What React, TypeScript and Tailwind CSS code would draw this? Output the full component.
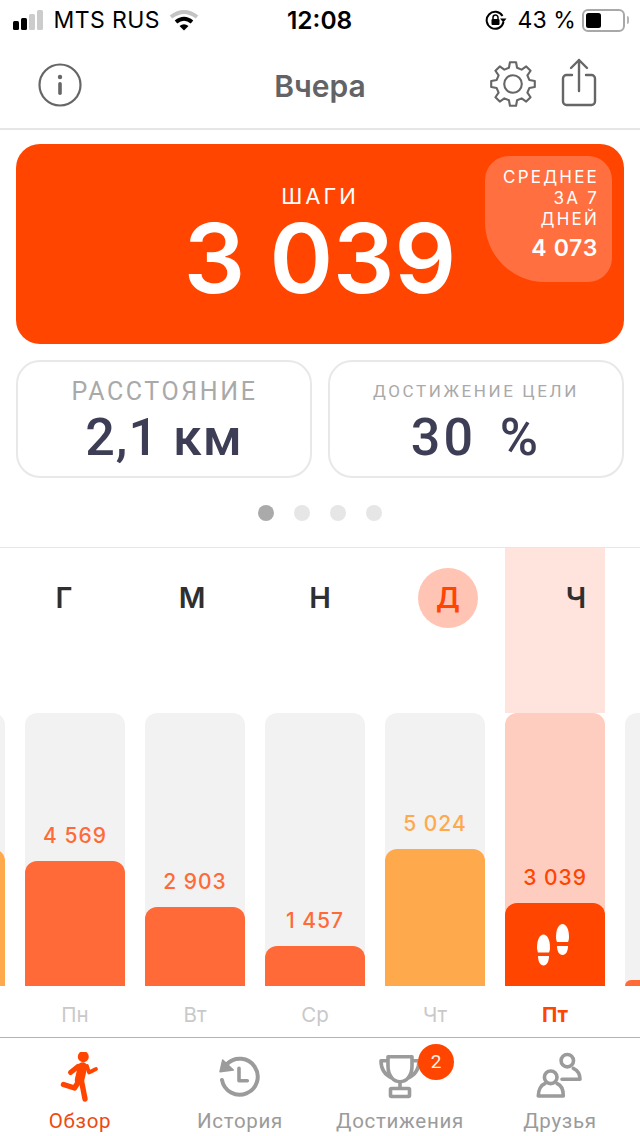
import React from "react";

const inter = "font-['Inter','Liberation_Sans',sans-serif]";

function gearPath() {
  const pts: string[] = [];
  for (let i = 0; i < 8; i++) {
    const a = (i * 45 - 90) * (Math.PI / 180);
    const offs: [number, number][] = [
      [-14, 16.8],
      [-8, 22],
      [8, 22],
      [14, 16.8],
    ];
    for (const [d, r] of offs) {
      const t = a + (d * Math.PI) / 180;
      pts.push(`${(24 + r * Math.cos(t)).toFixed(2)} ${(24 + r * Math.sin(t)).toFixed(2)}`);
    }
  }
  return "M" + pts.join("L") + "Z";
}

function StatusBar() {
  return (
    <div className={`h-[44px] shrink-0 flex items-center relative text-black pb-[4px] ${inter}`}>
      <div className="flex items-center pl-[13px]">
        <div className="flex items-end gap-[2.500px] h-[20px]">
          <span className="w-[5.500px] h-[9px] rounded-[1.500px] bg-black" />
          <span className="w-[5.500px] h-[12px] rounded-[1.500px] bg-black" />
          <span className="w-[5.500px] h-[16px] rounded-[1.500px] bg-[#cccccc]" />
          <span className="w-[5.500px] h-[20px] rounded-[1.500px] bg-[#cccccc]" />
        </div>
        <span className="ml-[11px] text-[23px] leading-none font-normal tracking-[0.4px]">MTS RUS</span>
        <svg className="ml-[9px]" width="30" height="22" viewBox="0 0 30 22" fill="none">
          <path d="M2 8Q15 -2 28 8" stroke="#c4c4c4" strokeWidth="4" />
          <path d="M7 13Q15 6.500 23 13" stroke="#000" strokeWidth="4" />
          <path d="M10.500 17Q15 13.500 19.500 17L15 21.500Z" fill="#000" />
        </svg>
      </div>
      <span className="absolute left-[287px] top-[7px] text-[24.500px] leading-[26px] font-semibold">12:08</span>
      <div className="ml-auto flex items-center pr-[11px]">
        <svg width="22" height="20" viewBox="0 0 22 20" fill="none">
          <path d="M17.500 6A8.500 8.500 0 1 0 18.500 12" stroke="#000" strokeWidth="2" />
          <path d="M15 8.500h6.500l-3.200 4z" fill="#000" />
          <rect x="6.500" y="9" width="8" height="6" rx="1" fill="#000" />
          <path d="M8 9V7.500a2.500 2.500 0 0 1 5 0V9" stroke="#000" strokeWidth="1.500" />
        </svg>
        <span className="ml-[10px] text-[23px] leading-none tracking-[0.1px]">43 %</span>
        <div className="ml-[6px] flex items-center">
          <div className="w-[43px] h-[23px] rounded-[6px] border-2 border-[#a8a8a8] p-[2px] flex">
            <div className="w-[15px] rounded-[2.500px] bg-black" />
          </div>
          <div className="ml-[2px] w-[2px] h-[8px] rounded-r-full bg-[#b5b5b5]" />
        </div>
      </div>
    </div>
  );
}

function Header() {
  return (
    <div className="h-[86px] shrink-0 border-b-2 border-[#e6e6e6] flex items-center relative">
      <svg className="absolute left-[37px] top-[18px]" width="46" height="46" viewBox="0 0 46 46" fill="none">
        <circle cx="23" cy="23" r="20.500" stroke="#666" strokeWidth="2.200" />
        <circle cx="23" cy="15" r="2.200" fill="#666" />
        <rect x="21.200" y="20" width="3.600" height="13" rx="1.800" fill="#666" />
      </svg>
      <div className={`w-full text-center text-[30px] leading-[36px] font-semibold text-[#636366] ${inter}`}>Вчера</div>
      <svg className="absolute left-[489px] top-[16px]" width="48" height="48" viewBox="0 0 48 48" fill="none" stroke="#666" strokeWidth="2.100" strokeLinejoin="round">
        <path d={gearPath()} />
        <circle cx="24" cy="24" r="8.800" />
      </svg>
      <svg className="absolute left-[561px] top-[14px]" width="38" height="50" viewBox="0 0 38 50" fill="none" stroke="#666" strokeWidth="2.400" strokeLinecap="round" strokeLinejoin="round">
        <path d="M11 17H5.500a3.500 3.500 0 0 0-3.500 3.500v23a3.500 3.500 0 0 0 3.500 3.500h25a3.500 3.500 0 0 0 3.500-3.500v-23a3.500 3.500 0 0 0-3.500-3.500H25" />
        <path d="M18 33V2M10 10l8-8 8 8" />
      </svg>
    </div>
  );
}

function Hero() {
  return (
    <div className={`mx-4 mt-[14px] h-[200px] shrink-0 rounded-[24px] bg-[#ff4500] relative text-white ${inter}`}>
      <div className="pt-[39px] text-center text-[22px] leading-[26px] tracking-[3px] font-normal">ШАГИ</div>
      <div className="text-center text-[96.500px] leading-[80px] font-semibold mt-[9px]">3 039</div>
      <div className="absolute left-[469px] top-[12px] w-[127px] h-[126px] bg-[#ff6f40] rounded-tl-[24px] rounded-tr-[24px] rounded-br-[24px] rounded-bl-[60px] pt-[11px] pr-[14px] text-right">
        <div className="text-[17px] leading-[21px] tracking-[2.200px] -mr-[1px]">СРЕДНЕЕ</div>
        <div className="text-[17px] leading-[21px] tracking-[2.200px] -mr-[1px]">ЗА 7</div>
        <div className="text-[17px] leading-[21px] tracking-[2.200px] -mr-[1px]">ДНЕЙ</div>
        <div className="text-[23px] leading-[28px] font-semibold tracking-[0.7px] mt-[4px]">4 073</div>
      </div>
    </div>
  );
}

function StatCard({ label, value, small }: { label: string; value: string; small?: boolean }) {
  return (
    <div className="flex-1 h-[118px] rounded-[24px] border-2 border-[#e8e8e8] flex flex-col items-center font-['Roboto',sans-serif]">
      <div className={small ? "mt-[17px] h-[24px] text-[17px] leading-[24px] tracking-[2.600px] text-[#a9a9a9]" : "mt-[17px] pl-[1px] h-[26px] text-[25px] leading-[26px] tracking-[2.600px] text-[#a9a9a9]"}>{label}</div>
      <div className={`text-[52px] leading-[56px] font-medium text-[#3d3d55] ${small ? "mt-[7px] tracking-[3px] [word-spacing:8px]" : "mt-[5px] tracking-[1px]"}`}>{value}</div>
    </div>
  );
}

const days = [
  { day: "", value: "", h: 137, color: "bg-[#ffa94d]", text: "" },
  { day: "Пн", value: "4 569", h: 125, color: "bg-[#ff6a38]", text: "text-[#ff6a38]" },
  { day: "Вт", value: "2 903", h: 79, color: "bg-[#ff6a38]", text: "text-[#ff6a38]" },
  { day: "Ср", value: "1 457", h: 40, color: "bg-[#ff6a38]", text: "text-[#ff6a38]" },
  { day: "Чт", value: "5 024", h: 137, color: "bg-[#ffa94d]", text: "text-[#ffa94d]" },
  { day: "Пт", value: "3 039", h: 83, color: "bg-[#ff4500]", text: "text-[#ff4500]", active: true },
  { day: "", value: "", h: 6, color: "bg-[#ff6a38]", text: "" },
];

const letters = ["Г", "М", "Н", "Д", "Ч"];

function Footprints() {
  return (
    <svg className="mr-[4px]" width="32" height="42" viewBox="0 0 32 42" fill="white">
      <path d="M19 13C19 5 22 0 25.500 0C29 0 32 5 32 13C32 15 31.500 17 31 18H20C19.500 17 19 15 19 13Z" />
      <path d="M20 22H31C31 27 29 31 25.500 31C22 31 20 27 20 22Z" />
      <path d="M0 23.500C0 15.500 3 10.500 6.500 10.500C10 10.500 13 15.500 13 23.500C13 25.500 12.500 27.500 12 28.500H1C.5 27.500 0 25.500 0 23.500Z" />
      <path d="M1 32H12C12 37 10 41.500 6.500 41.500C3 41.500 1 37 1 32Z" />
    </svg>
  );
}

function Chart() {
  return (
    <div className={`h-[490px] shrink-0 border-t border-[#e6e6e6] overflow-hidden relative mt-[26px] ${inter}`}>
      <div className="flex gap-5 ml-[-95px] w-[840px]">
        {days.map((d, i) => (
          <div key={i} className="w-[100px] shrink-0 flex flex-col">
            <div className={`h-[165px] shrink-0 ${d.active ? "bg-[#ffe4dd]" : ""}`} />
            <div className={`h-[273px] shrink-0 rounded-t-[12px] overflow-hidden flex flex-col justify-end items-center ${d.active ? "bg-[#ffcdbf]" : "bg-[#f2f2f2]"}`}>
              {d.value && <div className={`text-[21px] leading-[26px] font-medium tracking-[1px] mb-[12px] ${d.text}`}>{d.value}</div>}
              <div className={`w-full shrink-0 rounded-t-[12px] flex items-center justify-center ${d.color}`} style={{ height: d.h }}>
                {d.active && <Footprints />}
              </div>
            </div>
            <div className={`text-center text-[20.500px] leading-[24px] mt-[17px] ${d.active ? "font-bold text-[#ff4500]" : "text-[#c9c9c9]"}`}>{d.day}</div>
          </div>
        ))}
      </div>
      <div className="absolute left-0 top-[20px] w-[640px] grid grid-cols-5">
        {letters.map((l) => (
          <div key={l} className="flex justify-center">
            {l === "Д" ? (
              <div className="w-[60px] h-[60px] rounded-full bg-[#ffc4b3] flex items-center justify-center text-[28px] font-semibold text-[#ff4500]">Д</div>
            ) : (
              <div className="text-[29px] leading-[60px] font-semibold text-[#2f2f2f]">{l}</div>
            )}
          </div>
        ))}
      </div>
    </div>
  );
}

function TabItem({ label, active, children }: { label: string; active?: boolean; children: React.ReactNode }) {
  return (
    <div className="flex-1 flex flex-col items-center relative">
      <div className="h-[64px] flex items-end justify-center">{children}</div>
      <div className={`mt-[7px] text-[20.500px] leading-[24px] tracking-[0.7px] font-['Roboto',sans-serif] whitespace-nowrap ${active ? "text-[#ee4a10]" : "text-[#9b9b9b]"}`}>{label}</div>
    </div>
  );
}

function TabBar() {
  return (
    <div className="h-[99px] shrink-0 border-t border-[#b3b3b3] flex bg-white relative">
      <TabItem label="Обзор" active>
        <svg width="40" height="50" viewBox="0 0 40 50" fill="none" stroke="#ff4500" strokeLinecap="round" strokeLinejoin="round">
          <circle cx="23.300" cy="4.700" r="5.500" fill="#ff4500" stroke="none" />
          <path d="M22.500 15L19.500 28" strokeWidth="9.500" />
          <path d="M27 14L29 20.500L36 17" strokeWidth="3.800" />
          <path d="M18 14.500L10.500 20.500" strokeWidth="5" />
          <path d="M19 29L14.500 36L3.500 32.500" strokeWidth="5.400" />
          <path d="M21.500 29L25 47" strokeWidth="5.400" />
        </svg>
      </TabItem>
      <TabItem label="История">
        <svg width="48" height="50" viewBox="0 0 48 50" fill="none" stroke="#9b9b9b" strokeLinecap="round" strokeLinejoin="round">
          <path d="M11 12A18 18 0 1 1 6 28" strokeWidth="4" />
          <path d="M4 19.700L6.700 8L17.300 18Z" fill="#9b9b9b" strokeWidth="1.500" />
          <path d="M23 16.300V28.700H31.300" strokeWidth="3.600" />
        </svg>
      </TabItem>
      <TabItem label="Достижения">
        <svg width="42" height="50" viewBox="0 0 42 50" fill="none" stroke="#9b9b9b" strokeWidth="3.600" strokeLinejoin="round">
          <path d="M9 4.700H33V14C33 23 28 29.700 21 29.700S9 23 9 14Z" />
          <path d="M9 8.700H2C2 17 6 23 13 26M33 8.700H40C40 17 36 23 29 26" />
          <path d="M21 29.700V36" />
          <rect x="11.500" y="36.500" width="19" height="8" rx="1" />
        </svg>
      </TabItem>
      <TabItem label="Друзья">
        <svg width="48" height="50" viewBox="0 0 48 50" fill="none" stroke="#9b9b9b" strokeWidth="3.600" strokeLinecap="round" strokeLinejoin="round">
          <circle cx="31.300" cy="8.700" r="6.200" />
          <path d="M37.300 16.300C41 18 44 22 44 27.300H26" />
          <circle cx="14.700" cy="25.300" r="6.300" />
          <path d="M9 31.500C5 33 2.300 38 2.300 44H27.300C27.300 38 25 33 21 31.500" />
        </svg>
      </TabItem>
      <div className="absolute left-[418px] top-[6px] w-[36px] h-[36px] rounded-full bg-[#ff4500] text-[#fff3e6] flex items-center justify-center text-[19px] font-['Roboto',sans-serif]">2</div>
    </div>
  );
}

export default function App() {
  return (
    <div className="w-[640px] h-[1136px] bg-white overflow-hidden flex flex-col">
      <StatusBar />
      <Header />
      <Hero />
      <div className="mx-4 mt-4 flex gap-4 shrink-0">
        <StatCard label="РАССТОЯНИЕ" value="2,1 км" />
        <StatCard label="ДОСТИЖЕНИЕ ЦЕЛИ" value="30 %" small />
      </div>
      <div className="mt-[27px] h-[16px] shrink-0 flex justify-center gap-5 pr-[1px]">
        <span className="w-4 h-4 rounded-full bg-[#aaaaaa]" />
        <span className="w-4 h-4 rounded-full bg-[#e6e6e6]" />
        <span className="w-4 h-4 rounded-full bg-[#e6e6e6]" />
        <span className="w-4 h-4 rounded-full bg-[#e6e6e6]" />
      </div>
      <Chart />
      <TabBar />
    </div>
  );
}
